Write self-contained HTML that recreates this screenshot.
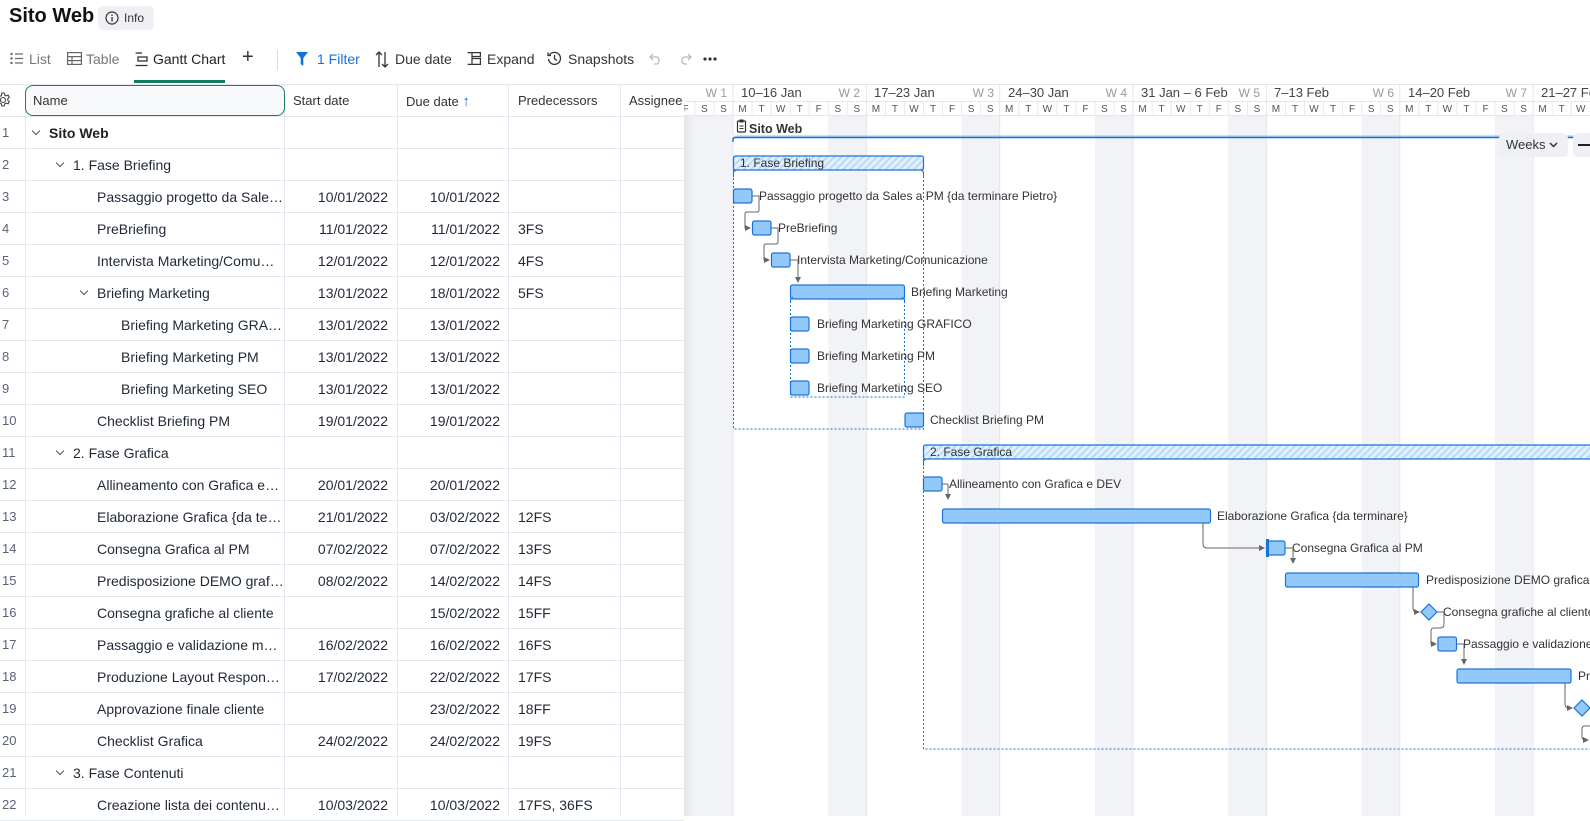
<!DOCTYPE html>
<html><head><meta charset="utf-8">
<style>
*{box-sizing:border-box;margin:0;padding:0}
body{width:1590px;height:816px;overflow:hidden;background:#fff;font-family:"Liberation Sans",sans-serif;color:#1f2937;position:relative}
.abs{position:absolute}
.t{font-size:14px;white-space:nowrap}
.tb{position:absolute;top:51px;font-size:14px;color:#333;white-space:nowrap}
.row{position:absolute;left:0;width:684px;height:32px;border-bottom:1px solid #e6e8ef}
.row span{position:absolute;top:8px;font-size:14px;white-space:nowrap}
.num{left:2px;color:#5a6378;font-size:13px!important}
.sd{right:296px}
.dd{right:184px}
.pr{left:518px}
.vl{position:absolute;top:84px;width:1px;height:732px;background:#e6e8ef}
.chev{position:absolute;top:11px;width:6px;height:6px;border-right:1.3px solid #555;border-bottom:1.3px solid #555;transform:rotate(45deg)}
</style></head><body>

<div class="abs" style="left:9px;top:5px;font-size:20px;font-weight:bold;color:#111">Sito Web</div>
<div class="abs" style="left:98px;top:6px;width:56px;height:24px;background:#eef0f3;border-radius:5px"></div>
<svg class="abs" style="left:105px;top:11px" width="14" height="14" viewBox="0 0 14 14"><circle cx="7" cy="7" r="6" fill="none" stroke="#333" stroke-width="1.2"/><rect x="6.4" y="6" width="1.3" height="4.5" fill="#333"/><circle cx="7" cy="4.2" r=".8" fill="#333"/></svg>
<div class="abs" style="left:124px;top:11px;font-size:12px;color:#333">Info</div>

<!-- toolbar -->
<svg class="abs" style="left:10px;top:52px" width="13" height="13" viewBox="0 0 13 13" fill="#666"><circle cx="1.5" cy="2" r="1.2"/><circle cx="1.5" cy="6.5" r="1.2"/><circle cx="1.5" cy="11" r="1.2"/><rect x="5" y="1.4" width="8" height="1.2"/><rect x="5" y="5.9" width="8" height="1.2"/><rect x="5" y="10.4" width="8" height="1.2"/></svg>
<div class="tb" style="left:29px;color:#777">List</div>
<svg class="abs" style="left:67px;top:52px" width="15" height="13" viewBox="0 0 15 13" fill="none" stroke="#666" stroke-width="1.2"><rect x=".6" y=".6" width="13.8" height="11.8"/><line x1=".6" y1="4.6" x2="14.4" y2="4.6"/><line x1=".6" y1="8.6" x2="14.4" y2="8.6"/><line x1="5" y1="4.6" x2="5" y2="12.4"/></svg>
<div class="tb" style="left:86px;color:#777">Table</div>
<svg class="abs" style="left:135px;top:52px" width="13" height="15" viewBox="0 0 13 15" fill="none" stroke="#333" stroke-width="1.3"><line x1=".6" y1="1" x2="7" y2="1"/><rect x="3" y="5" width="9" height="4"/><line x1=".6" y1="13.5" x2="12.5" y2="13.5"/></svg>
<div class="tb" style="left:153px;color:#222">Gantt Chart</div>
<div class="abs" style="left:134px;top:80px;width:91px;height:3px;background:#0f7b5c"></div>
<div class="abs" style="left:242px;top:46px;font-size:20px;color:#333">+</div>
<div class="abs" style="left:277px;top:50px;width:1px;height:20px;background:#ddd"></div>
<svg class="abs" style="left:296px;top:52px" width="12" height="14" viewBox="0 0 12 14"><path d="M0 0H12L7.3 6V14L4.7 12V6Z" fill="#1570d6"/></svg>
<div class="tb" style="left:317px;color:#1570d6">1 Filter</div>
<svg class="abs" style="left:375px;top:51px" width="14" height="17" viewBox="0 0 14 17" fill="none" stroke="#333" stroke-width="1.3"><path d="M4 16V1M1 4L4 1L7 4M10 1V16M7 13L10 16L13 13"/></svg>
<div class="tb" style="left:395px">Due date</div>
<svg class="abs" style="left:467px;top:52px" width="14" height="13" viewBox="0 0 14 13" fill="none" stroke="#333" stroke-width="1.2"><path d="M.6 .6H5V12.4H.6M5 .6H13.4V4.5H5M5 6.5H13.4V12.4H5"/></svg>
<div class="tb" style="left:487px">Expand</div>
<svg class="abs" style="left:547px;top:51px" width="15" height="15" viewBox="0 0 15 15" fill="none" stroke="#333" stroke-width="1.3"><path d="M2.5 4A6 6 0 1 1 1.5 8"/><path d="M1 1.5V4.5H4"/><path d="M7.5 4V7.8L10 9.5"/></svg>
<div class="tb" style="left:568px">Snapshots</div>
<svg class="abs" style="left:649px;top:53px" width="13" height="12" viewBox="0 0 13 12" fill="none" stroke="#bbb" stroke-width="1.3"><path d="M4 1L1 4L4 7M1 4H8A4 4 0 0 1 8 11H5"/></svg>
<svg class="abs" style="left:679px;top:53px" width="13" height="12" viewBox="0 0 13 12" fill="none" stroke="#bbb" stroke-width="1.3"><path d="M9 1L12 4L9 7M12 4H5A4 4 0 0 0 5 11H8"/></svg>
<svg class="abs" style="left:703px;top:57px" width="14" height="4"><circle cx="2" cy="2" r="1.6" fill="#333"/><circle cx="7" cy="2" r="1.6" fill="#333"/><circle cx="12" cy="2" r="1.6" fill="#333"/></svg>

<!-- table header -->
<div class="abs" style="left:0;top:84px;width:684px;height:1px;background:#e6e8ef"></div>
<div class="abs" style="left:0;top:116px;width:684px;height:1px;background:#e6e8ef"></div>
<div class="vl" style="left:25px"></div><div class="vl" style="left:284px"></div><div class="vl" style="left:397px"></div><div class="vl" style="left:508px"></div><div class="vl" style="left:620px"></div>
<div class="abs" style="left:25px;top:85px;width:260px;height:31px;border:1.5px solid #1a7f5a;border-radius:8px;background:#f8f9fa"></div>
<svg class="abs" style="left:-5px;top:92px" width="16" height="16" viewBox="0 0 16 16" fill="none" stroke="#444" stroke-width="1.1"><circle cx="8" cy="8" r="2.5"/><path d="M6.8 1h2.4l.4 2 1.6.9 1.9-.7 1.2 2.1-1.5 1.3v1.8l1.5 1.3-1.2 2.1-1.9-.7-1.6.9-.4 2H6.8l-.4-2-1.6-.9-1.9.7-1.2-2.1 1.5-1.3V7.2L1.7 5.9 2.9 3.8l1.9.7 1.6-.9z"/></svg>
<div class="abs" style="left:33px;top:93px;font-size:13px;color:#333">Name</div>
<div class="abs" style="left:293px;top:93px;font-size:13px;color:#333">Start date</div>
<div class="abs" style="left:406px;top:93px;font-size:13px;color:#333">Due date <span style="color:#1570d6;font-size:15px">↑</span></div>
<div class="abs" style="left:518px;top:93px;font-size:13px;color:#333">Predecessors</div>
<div class="abs" style="left:629px;top:93px;font-size:13px;color:#333">Assignee</div>

<!-- rows -->
<div class="row" style="top:117px"><span class="num">1</span><i class="chev" style="left:33px"></i><span style="left:49px;font-weight:bold;color:#222">Sito Web</span></div>
<div class="row" style="top:149px"><span class="num">2</span><i class="chev" style="left:57px"></i><span style="left:73px">1. Fase Briefing</span></div>
<div class="row" style="top:181px"><span class="num">3</span><span style="left:97px">Passaggio progetto da Sale…</span><span class="sd">10/01/2022</span><span class="dd">10/01/2022</span></div>
<div class="row" style="top:213px"><span class="num">4</span><span style="left:97px">PreBriefing</span><span class="sd">11/01/2022</span><span class="dd">11/01/2022</span><span class="pr">3FS</span></div>
<div class="row" style="top:245px"><span class="num">5</span><span style="left:97px">Intervista Marketing/Comu…</span><span class="sd">12/01/2022</span><span class="dd">12/01/2022</span><span class="pr">4FS</span></div>
<div class="row" style="top:277px"><span class="num">6</span><i class="chev" style="left:81px"></i><span style="left:97px">Briefing Marketing</span><span class="sd">13/01/2022</span><span class="dd">18/01/2022</span><span class="pr">5FS</span></div>
<div class="row" style="top:309px"><span class="num">7</span><span style="left:121px">Briefing Marketing GRA…</span><span class="sd">13/01/2022</span><span class="dd">13/01/2022</span></div>
<div class="row" style="top:341px"><span class="num">8</span><span style="left:121px">Briefing Marketing PM</span><span class="sd">13/01/2022</span><span class="dd">13/01/2022</span></div>
<div class="row" style="top:373px"><span class="num">9</span><span style="left:121px">Briefing Marketing SEO</span><span class="sd">13/01/2022</span><span class="dd">13/01/2022</span></div>
<div class="row" style="top:405px"><span class="num">10</span><span style="left:97px">Checklist Briefing PM</span><span class="sd">19/01/2022</span><span class="dd">19/01/2022</span></div>
<div class="row" style="top:437px"><span class="num">11</span><i class="chev" style="left:57px"></i><span style="left:73px">2. Fase Grafica</span></div>
<div class="row" style="top:469px"><span class="num">12</span><span style="left:97px">Allineamento con Grafica e…</span><span class="sd">20/01/2022</span><span class="dd">20/01/2022</span></div>
<div class="row" style="top:501px"><span class="num">13</span><span style="left:97px">Elaborazione Grafica {da te…</span><span class="sd">21/01/2022</span><span class="dd">03/02/2022</span><span class="pr">12FS</span></div>
<div class="row" style="top:533px"><span class="num">14</span><span style="left:97px">Consegna Grafica al PM</span><span class="sd">07/02/2022</span><span class="dd">07/02/2022</span><span class="pr">13FS</span></div>
<div class="row" style="top:565px"><span class="num">15</span><span style="left:97px">Predisposizione DEMO graf…</span><span class="sd">08/02/2022</span><span class="dd">14/02/2022</span><span class="pr">14FS</span></div>
<div class="row" style="top:597px"><span class="num">16</span><span style="left:97px">Consegna grafiche al cliente</span><span class="dd">15/02/2022</span><span class="pr">15FF</span></div>
<div class="row" style="top:629px"><span class="num">17</span><span style="left:97px">Passaggio e validazione m…</span><span class="sd">16/02/2022</span><span class="dd">16/02/2022</span><span class="pr">16FS</span></div>
<div class="row" style="top:661px"><span class="num">18</span><span style="left:97px">Produzione Layout Respon…</span><span class="sd">17/02/2022</span><span class="dd">22/02/2022</span><span class="pr">17FS</span></div>
<div class="row" style="top:693px"><span class="num">19</span><span style="left:97px">Approvazione finale cliente</span><span class="dd">23/02/2022</span><span class="pr">18FF</span></div>
<div class="row" style="top:725px"><span class="num">20</span><span style="left:97px">Checklist Grafica</span><span class="sd">24/02/2022</span><span class="dd">24/02/2022</span><span class="pr">19FS</span></div>
<div class="row" style="top:757px"><span class="num">21</span><i class="chev" style="left:57px"></i><span style="left:73px">3. Fase Contenuti</span></div>
<div class="row" style="top:789px"><span class="num">22</span><span style="left:97px">Creazione lista dei contenu…</span><span class="sd">10/03/2022</span><span class="dd">10/03/2022</span><span class="pr">17FS, 36FS</span></div>

<!-- gantt -->
<svg class="abs" style="left:684px;top:84px" width="906" height="732" viewBox="684 84 906 732" font-family="Liberation Sans, sans-serif">
<defs>
<pattern id="h" width="5" height="5" patternUnits="userSpaceOnUse" patternTransform="rotate(45)"><rect width="5" height="5" fill="#e3f0fd"/><rect width="2" height="5" fill="#b9dafa"/></pattern>
<linearGradient id="sh" x1="0" x2="1"><stop offset="0" stop-color="#e4e6ea"/><stop offset="1" stop-color="#f3f4f7"/></linearGradient>
<marker id="a" viewBox="0 0 6 6" refX="5" refY="3" markerWidth="6" markerHeight="6" orient="auto"><path d="M0 0L6 3L0 6Z" fill="#666"/></marker>
</defs>
<rect x="684" y="84" width="906" height="732" fill="#fff"/>
<g fill="#f1f3f7">
<rect x="695" y="116" width="38" height="700"/><rect x="828.3" y="116" width="38.1" height="700"/><rect x="961.6" y="116" width="38.1" height="700"/><rect x="1095" y="116" width="38.1" height="700"/><rect x="1228.3" y="116" width="38.1" height="700"/><rect x="1361.7" y="116" width="38.1" height="700"/><rect x="1495" y="116" width="38.1" height="700"/>
</g>
<rect x="684" y="116" width="12" height="700" fill="url(#sh)"/>
<g stroke="#e4e6ec" stroke-width="1">
<line x1="733" y1="84" x2="733" y2="816"/><line x1="866.4" y1="84" x2="866.4" y2="816"/><line x1="999.7" y1="84" x2="999.7" y2="816"/><line x1="1133" y1="84" x2="1133" y2="816"/><line x1="1266.4" y1="84" x2="1266.4" y2="816"/><line x1="1399.8" y1="84" x2="1399.8" y2="816"/><line x1="1533.1" y1="84" x2="1533.1" y2="816"/>
<line x1="684" y1="84.5" x2="1590" y2="84.5"/><line x1="684" y1="101.5" x2="1590" y2="101.5"/><line x1="684" y1="115.5" x2="1590" y2="115.5"/>
</g>
<g stroke="#e8eaef"><path d="M695 102V116M714 102V116M752 102V116M771.1 102V116M790.2 102V116M809.2 102V116M828.3 102V116M847.3 102V116M885.4 102V116M904.5 102V116M923.5 102V116M942.6 102V116M961.6 102V116M980.7 102V116M1018.8 102V116M1037.8 102V116M1056.9 102V116M1075.9 102V116M1095 102V116M1114 102V116M1152.1 102V116M1171.2 102V116M1190.2 102V116M1209.3 102V116M1228.3 102V116M1247.4 102V116M1285.5 102V116M1304.5 102V116M1323.6 102V116M1342.6 102V116M1361.7 102V116M1380.7 102V116M1418.8 102V116M1437.9 102V116M1456.9 102V116M1476 102V116M1495 102V116M1514.1 102V116M1552.2 102V116M1571.2 102V116"/></g>
<g font-size="13" fill="#444">
<text x="741" y="97">10–16 Jan</text><text x="874" y="97">17–23 Jan</text><text x="1008" y="97">24–30 Jan</text><text x="1141" y="97">31 Jan – 6 Feb</text><text x="1274" y="97">7–13 Feb</text><text x="1408" y="97">14–20 Feb</text><text x="1541" y="97">21–27 Feb</text>
</g>
<g font-size="12" fill="#999" text-anchor="end">
<text x="727" y="97">W 1</text><text x="860" y="97">W 2</text><text x="994" y="97">W 3</text><text x="1127" y="97">W 4</text><text x="1260" y="97">W 5</text><text x="1394" y="97">W 6</text><text x="1527" y="97">W 7</text>
</g>
<g font-size="10" fill="#555" text-anchor="middle">
<text x="685.5" y="112">F</text><text x="704.5" y="112">S</text><text x="723.5" y="112">S</text>
<text x="742.5" y="112">M</text><text x="761.6" y="112">T</text><text x="780.6" y="112">W</text><text x="799.7" y="112">T</text><text x="818.7" y="112">F</text><text x="837.8" y="112">S</text><text x="856.8" y="112">S</text>
<text x="875.9" y="112">M</text><text x="894.9" y="112">T</text><text x="914" y="112">W</text><text x="933" y="112">T</text><text x="952.1" y="112">F</text><text x="971.1" y="112">S</text><text x="990.2" y="112">S</text>
<text x="1009.2" y="112">M</text><text x="1028.3" y="112">T</text><text x="1047.3" y="112">W</text><text x="1066.4" y="112">T</text><text x="1085.4" y="112">F</text><text x="1104.5" y="112">S</text><text x="1123.5" y="112">S</text>
<text x="1142.6" y="112">M</text><text x="1161.6" y="112">T</text><text x="1180.7" y="112">W</text><text x="1199.7" y="112">T</text><text x="1218.8" y="112">F</text><text x="1237.8" y="112">S</text><text x="1256.9" y="112">S</text>
<text x="1275.9" y="112">M</text><text x="1295" y="112">T</text><text x="1314" y="112">W</text><text x="1333.1" y="112">T</text><text x="1352.1" y="112">F</text><text x="1371.2" y="112">S</text><text x="1390.2" y="112">S</text>
<text x="1409.3" y="112">M</text><text x="1428.3" y="112">T</text><text x="1447.4" y="112">W</text><text x="1466.4" y="112">T</text><text x="1485.5" y="112">F</text><text x="1504.5" y="112">S</text><text x="1523.6" y="112">S</text>
<text x="1542.6" y="112">M</text><text x="1561.7" y="112">T</text><text x="1580.7" y="112">W</text>
</g>

<!-- Sito Web -->
<rect x="737.5" y="121" width="8" height="11" rx="1" fill="none" stroke="#333" stroke-width="1.2"/><rect x="739.5" y="119.5" width="4" height="3" fill="#333"/><path d="M739.5 126H743.5M739.5 128.5H743.5" stroke="#333"/>
<text x="749" y="133" font-size="12.5" font-weight="bold" fill="#333">Sito Web</text>
<path d="M733 142V139.5Q733 137.5 735 137.5H1590" fill="none" stroke="#1a73d9" stroke-width="1.5"/>
<line x1="735" y1="136" x2="1590" y2="136" stroke="#8fc3f5" stroke-width="1"/>
<rect x="1499" y="133" width="69" height="24" rx="5" fill="#eef0f4"/>
<text x="1506" y="149" font-size="13" fill="#333">Weeks</text>
<path d="M1550 143L1553.5 146.5L1557 143" fill="none" stroke="#333" stroke-width="1.5"/>
<rect x="1573" y="133" width="30" height="24" rx="5" fill="#eef0f4"/><rect x="1578" y="144" width="12" height="2" fill="#222"/>

<!-- Fase Briefing -->
<rect x="733.5" y="156" width="190" height="14" rx="2" fill="url(#h)" stroke="#1a73d9" stroke-width="1.2"/>
<text x="740" y="167" font-size="12" fill="#333">1. Fase Briefing</text>
<path d="M733.5 177V172L736 170M923.5 177V172L921 170" fill="none" stroke="#1a73d9"/>
<rect x="733.5" y="170" width="190" height="259" fill="none" stroke="#1a73d9" stroke-dasharray="2 2" stroke-width="1"/>

<g fill="#93c9f8" stroke="#1a73d9" stroke-width="1.2">
<rect x="733.5" y="189" width="18.5" height="14" rx="2"/>
<rect x="752.5" y="221" width="18.5" height="14" rx="2"/>
<rect x="771.5" y="253" width="18.5" height="14" rx="2"/>
<rect x="790.5" y="285" width="114" height="14" rx="2"/>
<rect x="790.5" y="317" width="18.5" height="14" rx="2"/>
<rect x="790.5" y="349" width="18.5" height="14" rx="2"/>
<rect x="790.5" y="381" width="18.5" height="14" rx="2"/>
<rect x="905" y="413" width="18.5" height="14" rx="2"/>
</g>
<path d="M790.5 303V299.5L793 297M904.5 303V299.5L902 297" fill="none" stroke="#1a73d9"/>
<rect x="790.5" y="299" width="114" height="98" fill="none" stroke="#1a73d9" stroke-dasharray="2 2"/>
<g font-size="12" fill="#333">
<text x="759" y="200">Passaggio progetto da Sales a PM {da terminare Pietro}</text>
<text x="778" y="232">PreBriefing</text>
<text x="797" y="264">Intervista Marketing/Comunicazione</text>
<text x="911" y="296">Briefing Marketing</text>
<text x="817" y="328">Briefing Marketing GRAFICO</text>
<text x="817" y="360">Briefing Marketing PM</text>
<text x="817" y="392">Briefing Marketing SEO</text>
<text x="930" y="424">Checklist Briefing PM</text>
</g>
<g fill="none" stroke="#666" stroke-width="1">
<path d="M752 196H759V210Q759 212 757 212H747Q745 212 745 214V228H750" marker-end="url(#a)"/>
<path d="M771 228H778V242Q778 244 776 244H766Q764 244 764 246V260H769" marker-end="url(#a)"/>
<path d="M790 260H798V282" marker-end="url(#a)"/>
</g>

<!-- Fase Grafica -->
<rect x="923.5" y="445" width="680" height="14" rx="2" fill="url(#h)" stroke="#1a73d9" stroke-width="1.2"/>
<text x="930" y="456" font-size="12" fill="#333">2. Fase Grafica</text>
<path d="M923.5 466V461L926 459" fill="none" stroke="#1a73d9"/>
<path d="M923.5 459V749H1590" fill="none" stroke="#1a73d9" stroke-dasharray="2 2"/>
<g fill="#93c9f8" stroke="#1a73d9" stroke-width="1.2">
<rect x="923.5" y="477" width="18.5" height="14" rx="2"/>
<rect x="942.5" y="509" width="268" height="14" rx="2"/>
<rect x="1266.5" y="541" width="18.5" height="14" rx="2"/>
<rect x="1285.5" y="573" width="133" height="14" rx="2"/>
<path d="M1429 604L1437 612L1429 620L1421 612Z"/>
<rect x="1438" y="637" width="18.5" height="14" rx="2"/>
<rect x="1457" y="669" width="114" height="14" rx="2"/>
<path d="M1582 700L1590 708L1582 716L1574 708Z"/>
</g>
<rect x="1266" y="539" width="3" height="18" fill="#1a73d9"/>
<g font-size="12" fill="#333">
<text x="949" y="488">Allineamento con Grafica e DEV</text>
<text x="1217" y="520">Elaborazione Grafica {da terminare}</text>
<text x="1292" y="552">Consegna Grafica al PM</text>
<text x="1426" y="584">Predisposizione DEMO grafica</text>
<text x="1443" y="616">Consegna grafiche al cliente</text>
<text x="1463" y="648">Passaggio e validazione m</text>
<text x="1578" y="680">Pr</text>
</g>
<g fill="none" stroke="#666" stroke-width="1">
<path d="M942 484H948M942 484"/>
<path d="M948 484V499" marker-end="url(#a)"/>
<path d="M1203 523V544Q1203 548 1207 548H1264" marker-end="url(#a)"/>
<path d="M1285 548H1293V563" marker-end="url(#a)"/>
<path d="M1413 587V608Q1413 612 1417 612H1419" marker-end="url(#a)"/>
<path d="M1437 612H1444V624Q1444 628 1440 628H1434Q1431 628 1431 631V644H1436" marker-end="url(#a)"/>
<path d="M1457 644H1464V664" marker-end="url(#a)"/>
<path d="M1565 683V704Q1565 708 1569 708H1572" marker-end="url(#a)"/>
<path d="M1590 726H1585Q1582 726 1582 729V737Q1582 740 1585 740H1588" marker-end="url(#a)"/>
</g>
</svg>
</body></html>
